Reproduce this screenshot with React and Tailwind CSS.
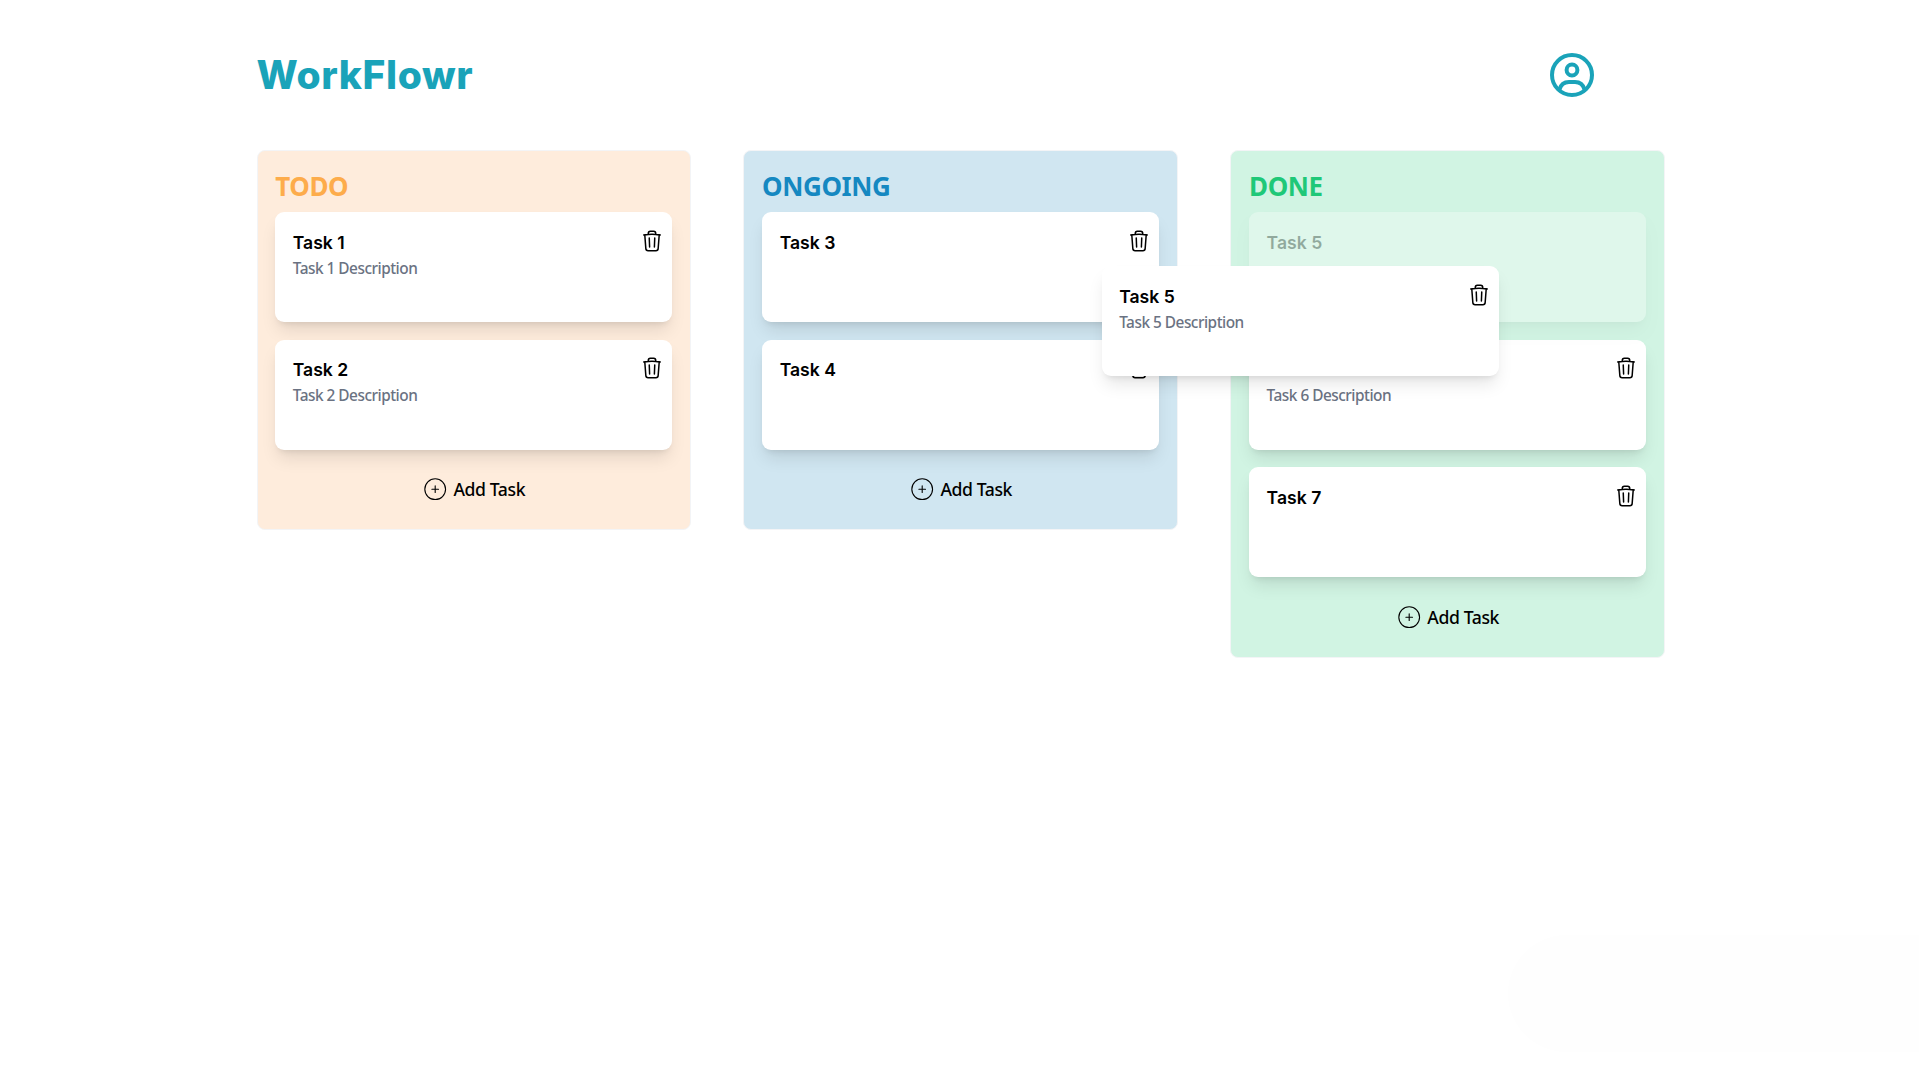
import { CiCirclePlus } from "react-icons/ci";

const TrashIcon = () => (
  <svg viewBox="0 0 24 24" fill="none" stroke="currentColor" strokeWidth="1.5" strokeLinecap="round" strokeLinejoin="round" className="size-6 shrink-0">
    <path d="m14.74 9-.346 9m-4.788 0L9.26 9m9.968-3.21c.342.052.682.107 1.022.166m-1.022-.165L18.16 19.673a2.25 2.25 0 0 1-2.244 2.077H8.084a2.25 2.25 0 0 1-2.244-2.077L4.772 5.79m14.456 0a48.108 48.108 0 0 0-3.478-.397m-12 .562c.34-.059.68-.114 1.022-.165m0 0a48.11 48.11 0 0 1 3.478-.397m7.5 0v-.916c0-1.18-.91-2.164-2.09-2.201a51.964 51.964 0 0 0-3.32 0c-1.18.037-2.09 1.022-2.09 2.201v.916m7.5 0a48.667 48.667 0 0 0-7.5 0" />
  </svg>
);

const ProfileIcon = () => (
  <svg viewBox="0 0 44 44" fill="none" stroke="currentColor" strokeWidth="4" className="size-11 text-[#1aa3b9]">
    <circle cx="22" cy="22" r="20" />
    <circle cx="22" cy="17" r="5.4" />
    <path d="M9.500 36.500c1.200-4.500 4.800-7.500 9.500-7.500h6c4.700 0 8.300 3 9.500 7.500" />
  </svg>
);

const columns = [
  {
    title: "TODO", bg: "bg-[#feecdc]", color: "text-[#fdac4b]",
    tasks: [{ name: "Task 1", text: "Task 1 Description" }, { name: "Task 2", text: "Task 2 Description" }],
  },
  {
    title: "ONGOING", bg: "bg-[#d0e6f1]", color: "text-[#1588c1]",
    tasks: [{ name: "Task 3" }, { name: "Task 4" }],
  },
  {
    title: "DONE", bg: "bg-[#d1f4e3]", color: "text-[#1fc878]",
    tasks: [{ name: "Task 5", ghost: true }, { name: "Task 6", text: "Task 6 Description" }, { name: "Task 7" }],
  },
];

function Card({ task }) {
  return (
    <div className={task.ghost ? "opacity-30" : ""}>
      <div className="flex h-[110px] justify-between rounded-[9px] bg-white pt-[16.7px] pr-2 pl-[17.6px] shadow-[0_11px_16.5px_-3px_rgb(0_0_0/0.1),0_4.4px_6.6px_-4px_rgb(0_0_0/0.1)]">
        <div>
          <h3 className="font-[family-name:Inter] text-[17.6px] leading-[27px] font-semibold">{task.name}</h3>
          {task.text && <p className="text-[15.4px] leading-[25px] font-medium tracking-[-0.5px] text-gray-500">{task.text}</p>}
        </div>
        {!task.ghost && <TrashIcon />}
      </div>
    </div>
  );
}

function Column({ column }) {
  return (
    <section className={`rounded-[8px] border border-gray-100 px-[17.6px] pt-[17px] pb-[26.4px] ${column.bg}`}>
      <h2 className={`mb-[6.8px] text-[26px] leading-[37px] font-bold tracking-[-0.4px] ${column.color}`}>{column.title}</h2>
      <div className="flex flex-col gap-[17.6px]">
        {column.tasks.map((task) => <Card key={task.name} task={task} />)}
      </div>
      <button className="mt-[26.4px] flex w-full items-center justify-center gap-[5px] text-[17.6px] leading-[27px] font-medium tracking-[-0.4px]">
        <CiCirclePlus className="size-[26.4px]" />
        Add Task
      </button>
    </section>
  );
}

export default function App() {
  return (
    <main className="relative min-h-screen overflow-hidden bg-white pl-[256.55px] font-[family-name:'Noto_Sans',sans-serif] text-black">
      <header className="flex h-[150.3px] w-[1337px] items-center justify-between">
        <h1 className="font-[family-name:Inter] text-[39px] font-extrabold tracking-[0.6px] text-[#1aa3b9]">WorkFlowr</h1>
        <ProfileIcon />
      </header>
      <div className="grid w-[1408px] grid-cols-3 items-start gap-[52.8px]">
        {columns.map((column) => <Column key={column.title} column={column} />)}
      </div>
      <div className="absolute top-[266px] left-[1101.6px] w-[397px]">
        <Card task={{ name: "Task 5", text: "Task 5 Description" }} />
      </div>
      <div className="absolute top-[935px] right-0 h-[117px] w-[411px] rounded-l-full bg-[#fefefe]" />
    </main>
  );
}
